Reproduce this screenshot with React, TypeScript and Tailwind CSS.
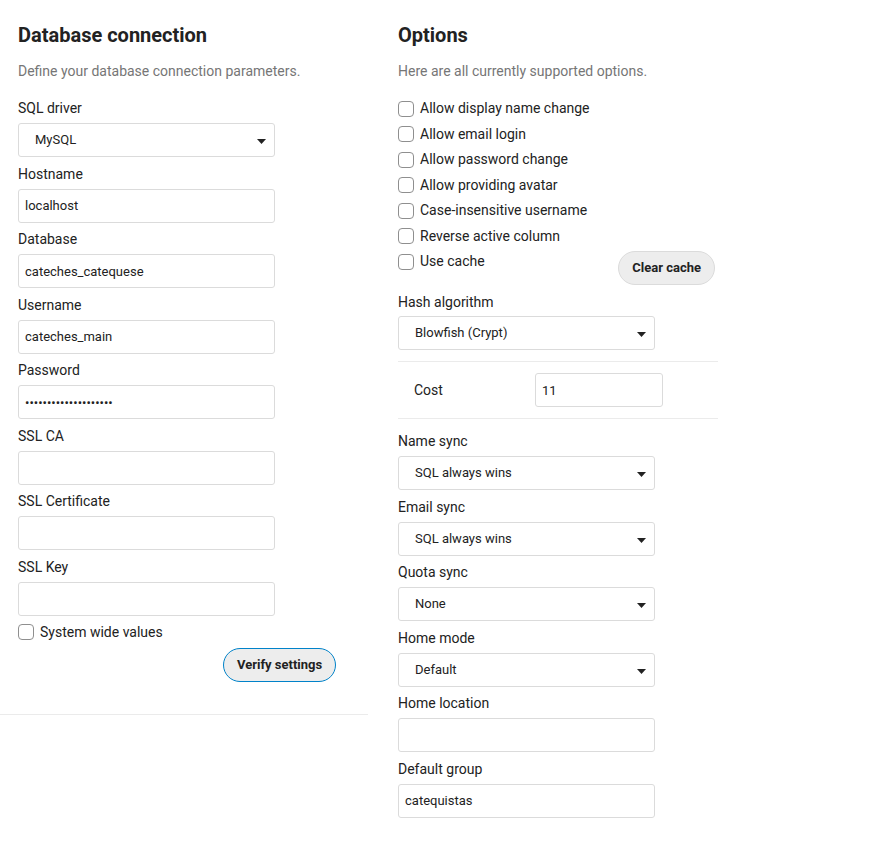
import React from "react";

type Field =
  | { kind: "select"; label: string; value: string }
  | { kind: "input"; label: string; value?: string; type?: string };

const dbFields: Field[] = [
  { kind: "select", label: "SQL driver", value: "MySQL" },
  { kind: "input", label: "Hostname", value: "localhost" },
  { kind: "input", label: "Database", value: "cateches_catequese" },
  { kind: "input", label: "Username", value: "cateches_main" },
  { kind: "input", label: "Password", value: "passwordpassword1234", type: "password" },
  { kind: "input", label: "SSL CA" },
  { kind: "input", label: "SSL Certificate" },
  { kind: "input", label: "SSL Key" },
];

const options = [
  "Allow display name change",
  "Allow email login",
  "Allow password change",
  "Allow providing avatar",
  "Case-insensitive username",
  "Reverse active column",
];

const syncFields: Field[] = [
  { kind: "select", label: "Name sync", value: "SQL always wins" },
  { kind: "select", label: "Email sync", value: "SQL always wins" },
  { kind: "select", label: "Quota sync", value: "None" },
  { kind: "select", label: "Home mode", value: "Default" },
  { kind: "input", label: "Home location" },
  { kind: "input", label: "Default group", value: "catequistas" },
];

function Select({ value }: { value: string }) {
  return (
    <div className="relative flex h-[34px] w-[257px] items-center rounded-[3px] border border-[#dbdbdb] bg-white pl-[16px] text-[13px] text-[#222]">
      <span>{value}</span>
      <svg
        className="absolute right-[8px] top-[15px]"
        width="9"
        height="5"
        viewBox="0 0 9 5"
      >
        <path d="M0 0h9L4.5 5z" fill="#222" />
      </svg>
    </div>
  );
}

function TextInput({ value, type }: { value?: string; type?: string }) {
  return (
    <input
      readOnly
      type={type ?? "text"}
      value={value ?? ""}
      className="block h-[34px] w-[257px] rounded-[3px] border border-[#dbdbdb] bg-white px-[6px] text-[13px] text-[#222] outline-none"
    />
  );
}

function FieldRow({ f }: { f: Field }) {
  return (
    <div className="mb-[6.5px]">
      <label className="block text-[14px] leading-[20px] text-[#222] mb-[5px]">{f.label}</label>
      {f.kind === "select" ? <Select value={f.value} /> : <TextInput value={f.value} type={f.type} />}
    </div>
  );
}

function Check({ label }: { label: string }) {
  return (
    <div className="flex h-[25.5px] items-center gap-[6px]">
      <span className="h-[16px] w-[16px] shrink-0 rounded-[4px] border border-[#8f8f8f] bg-white" />
      <span className="text-[14px] text-[#222]">{label}</span>
    </div>
  );
}

export default function App() {
  return (
    <div
      className="flex min-h-[844px] w-[884px] items-start bg-white"
      style={{ fontFamily: "Roboto, 'Noto Sans', sans-serif" }}
    >
      {/* Database connection */}
      <section className="w-[368px] border-b border-[#ebebeb] px-[18px] pt-[20px] pb-[32px]">
        <h2 className="text-[20px] font-bold leading-[30px] text-[#222]">Database connection</h2>
        <p className="mt-[11px] text-[14px] leading-[20px] text-[#767676]">
          Define your database connection parameters.
        </p>
        <div className="mt-[17px]">
          {dbFields.map((f) => (
            <FieldRow key={f.label} f={f} />
          ))}
        </div>
        <div className="flex h-[20px] items-center gap-[6px]">
          <span className="h-[16px] w-[16px] shrink-0 rounded-[4px] border border-[#8f8f8f] bg-white" />
          <span className="text-[14px] text-[#222]">System wide values</span>
        </div>
        <button className="ml-[205px] mt-[6px] h-[34px] rounded-full border border-[#0082c9] bg-[#ededed] px-[13px] text-[13px] font-bold text-[#222]">
          Verify settings
        </button>
      </section>

      {/* Options */}
      <section className="w-[350px] pl-[30px] pt-[20px]">
        <h2 className="text-[20px] font-bold leading-[30px] text-[#222]">Options</h2>
        <p className="mt-[11px] text-[14px] leading-[20px] text-[#767676]">
          Here are all currently supported options.
        </p>
        <div className="mt-[15px]">
          {options.map((o) => (
            <Check key={o} label={o} />
          ))}
          <div className="flex items-start justify-between pr-[3px]">
            <Check label="Use cache" />
            <button className="mt-[2px] h-[34px] rounded-full border border-[#dbdbdb] bg-[#ededed] px-[13px] text-[13px] font-bold text-[#222]">
              Clear cache
            </button>
          </div>
        </div>
        <div className="mt-[7px]">
          <label className="mb-[4px] block text-[14px] leading-[20px] text-[#222]">Hash algorithm</label>
          <Select value="Blowfish (Crypt)" />
        </div>
        <div className="mt-[11px] flex h-[58px] items-center border-y border-[#ebebeb] pl-[16px]">
          <span className="w-[121px] text-[14px] text-[#222]">Cost</span>
          <input
            readOnly
            value="11"
            className="h-[34px] w-[128px] rounded-[3px] border border-[#dbdbdb] bg-white px-[6px] text-[13px] text-[#222] outline-none"
          />
        </div>
        <div className="mt-[12px]">
          {syncFields.map((f) => (
            <FieldRow key={f.label} f={f} />
          ))}
        </div>
      </section>
    </div>
  );
}
